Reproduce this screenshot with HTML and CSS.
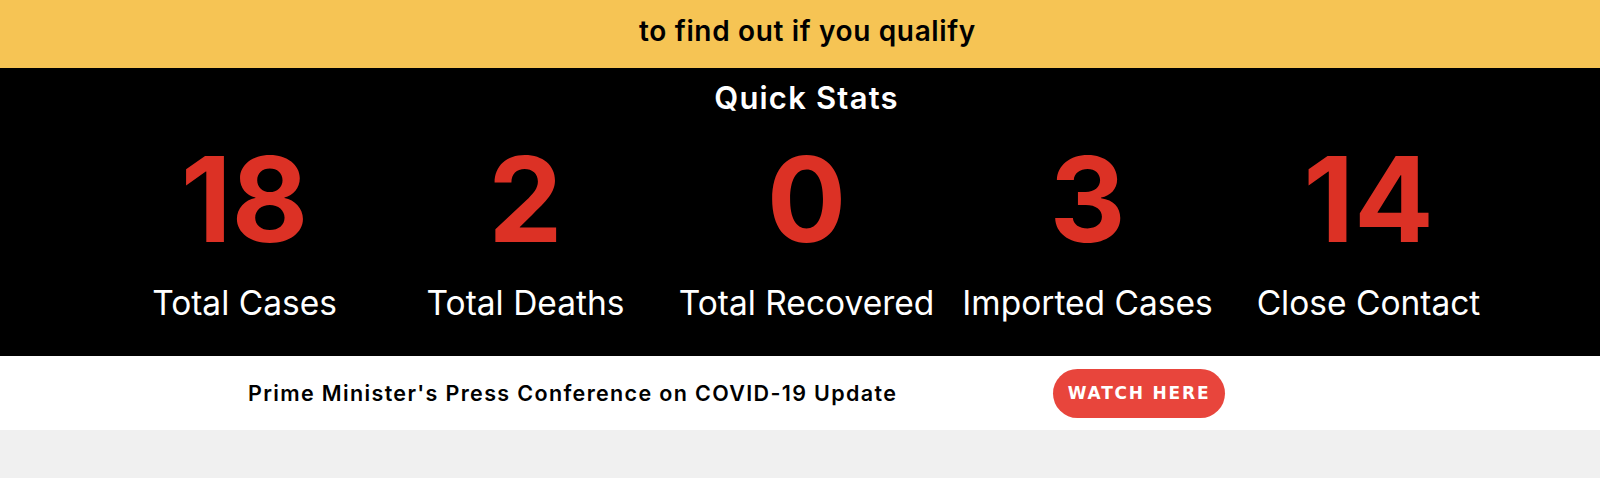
FILE: index.html
```html
<!DOCTYPE html>
<html lang="en">
<head>
<meta charset="utf-8">
<title>Quick Stats</title>
<link rel="stylesheet" href="styles.css">
</head>
<body>
  <div class="banner">to find out if you qualify</div>
  <section class="stats">
    <h2 class="stats-title">Quick Stats</h2>
    <div class="stats-row">
      <div class="stat"><div class="stat-num">18</div><div class="stat-label">Total Cases</div></div>
      <div class="stat"><div class="stat-num">2</div><div class="stat-label">Total Deaths</div></div>
      <div class="stat"><div class="stat-num">0</div><div class="stat-label">Total Recovered</div></div>
      <div class="stat"><div class="stat-num">3</div><div class="stat-label">Imported Cases</div></div>
      <div class="stat"><div class="stat-num">14</div><div class="stat-label">Close Contact</div></div>
    </div>
  </section>
  <section class="press">
    <div class="press-text">Prime Minister's Press Conference on COVID-19 Update</div>
    <a class="watch-btn" href="#">WATCH HERE</a>
  </section>
  <div class="footer-space"></div>
</body>
</html>
```

FILE: styles.css
```css
* { box-sizing: border-box; }
html, body { margin: 0; padding: 0; }
body {
  font-family: Inter, "Noto Sans", "Liberation Sans", sans-serif;
  background: #f0f0f0;
}
.banner {
  height: 68px;
  padding-bottom: 6px;
  padding-left: 15px;
  background: #f6c454;
  color: #000;
  font-size: 28px;
  font-weight: 600;
  letter-spacing: 0.65px;
  display: flex;
  align-items: center;
  justify-content: center;
}
.stats {
  background: #000;
  height: 288px;
  padding-top: 12px;
}
.stats-title {
  margin: 0;
  padding-left: 13px;
  color: #fff;
  text-align: center;
  font-size: 31px;
  font-weight: 600;
  letter-spacing: 1.2px;
  line-height: 36px;
}
.stats-row {
  display: grid;
  grid-template-columns: repeat(5, 281px);
  margin-left: 104px;
  margin-top: 18px;
}
.stat {
  display: flex;
  flex-direction: column;
  align-items: center;
}
.stat-num {
  color: #dc3125;
  font-size: 118px;
  font-weight: 700;
  line-height: 130px;
}
.stat-label {
  color: #fff;
  font-size: 33.5px;
  font-weight: 400;
  line-height: 40px;
  margin-top: 19px;
}
.press {
  background: #fff;
  height: 74px;
  display: flex;
  align-items: center;
}
.press-text {
  margin-left: 248px;
  width: 805px;
  font-size: 21.5px;
  font-weight: 600;
  letter-spacing: 1.35px;
  color: #000;
}
.watch-btn {
  display: flex;
  align-items: center;
  justify-content: center;
  width: 172px;
  height: 49px;
  border-radius: 25px;
  background: #e8453c;
  color: #fff;
  text-decoration: none;
  font-family: "DejaVu Sans", sans-serif;
  font-weight: 700;
  font-size: 17px;
  letter-spacing: 1.8px;
}
.footer-space { height: 48px; }
```
